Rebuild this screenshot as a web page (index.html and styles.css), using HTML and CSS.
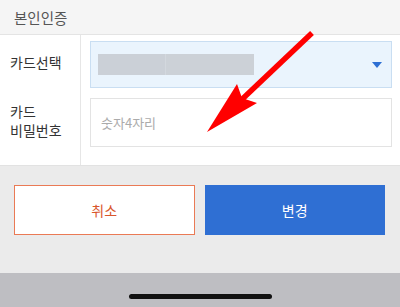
FILE: index.html
```html
<!DOCTYPE html>
<html lang="ko">
<head>
<meta charset="utf-8">
<link rel="stylesheet" href="styles.css">
</head>
<body>
<div class="page">
  <div class="header">본인인증</div>
  <div class="form">
    <div class="label first">카드선택</div>
    <div class="field first">
      <div class="select">
        <div class="mask"><span class="m1"></span><span class="m2"></span></div>
        <span class="caret"></span>
      </div>
    </div>
    <div class="label last">카드<br>비밀번호</div>
    <div class="field last">
      <div class="input">숫자4자리</div>
    </div>
  </div>
  <div class="actions">
    <button class="btn cancel">취소</button>
    <button class="btn ok">변경</button>
  </div>
  <div class="home"><span class="indicator"></span></div>
  <svg class="arrow" width="400" height="307" viewBox="0 0 400 307">
    <line x1="312" y1="33" x2="236" y2="105" stroke="#ff0000" stroke-width="5.5"/>
    <polygon points="207,132 237,84 242,98 257,103" fill="#ff0000"/>
  </svg>
</div>
</body>
</html>
```

FILE: styles.css
```css
* { box-sizing: border-box; }
html, body { margin: 0; padding: 0; }
body {
  width: 400px;
  height: 307px;
  overflow: hidden;
  font-family: "Noto Sans CJK KR", "Noto Sans", sans-serif;
  background: #ffffff;
}
.page { position: relative; width: 400px; height: 307px; }
.header {
  height: 35px;
  background: #f5f5f5;
  border-bottom: 1px solid #e4e4e4;
  padding-left: 14px;
  font-size: 14.5px;
  line-height: 35px;
  color: #555;
}
.form {
  display: grid;
  grid-template-columns: 81px 1fr;
  background: #fff;
  border-bottom: 1px solid #e2e2e2;
}
.label {
  border-right: 1px solid #e6e6e6;
  padding-left: 10px;
  font-size: 14px;
  color: #333;
  display: flex;
  align-items: center;
  line-height: 19px;
}
.label.first { padding-top: 2px; }
.label.last { padding-bottom: 12px; }
.field { padding: 0 8px 0 9px; }
.field.first { padding-top: 6px; }
.field.last { padding-top: 10px; padding-bottom: 18px; }
.select {
  height: 47px;
  background: #eaf4fd;
  border: 1px solid #c9def2;
  display: flex;
  align-items: center;
  justify-content: space-between;
  padding: 0 9px 0 7px;
}
.mask { display: flex; height: 21px; }
.mask .m1 { width: 67px; background: #cbd0d7; }
.mask .m2 { width: 89px; background: #ccd1d7; border-left: 1px solid #d3d8de; }
.caret {
  width: 0; height: 0;
  border-left: 5.5px solid transparent;
  border-right: 5.5px solid transparent;
  border-top: 6px solid #2d6fd3;
}
.input {
  height: 49px;
  border: 1px solid #e3e3e3;
  padding-left: 10px;
  font-size: 13px;
  color: #ababab;
  display: flex;
  align-items: center;
}
.actions {
  height: 107px;
  background: #ebebeb;
  display: flex;
  gap: 10px;
  padding: 19px 15px 0 14px;
}
.btn {
  flex: 1;
  height: 50px;
  font-family: inherit;
  font-size: 14px;
  border-radius: 0;
  cursor: pointer;
}
.cancel { background: #fff; border: 1px solid #ea7a55; color: #d9562c; }
.ok { background: #2f6fd3; border: 1px solid #2f6fd3; color: #fff; }
.home {
  height: 34px;
  background: #bebec2;
  display: flex;
  justify-content: center;
  padding-top: 21px;
}
.indicator {
  width: 143px;
  height: 5px;
  border-radius: 3px;
  background: #111;
}
.arrow { position: absolute; left: 0; top: 0; pointer-events: none; }
```
